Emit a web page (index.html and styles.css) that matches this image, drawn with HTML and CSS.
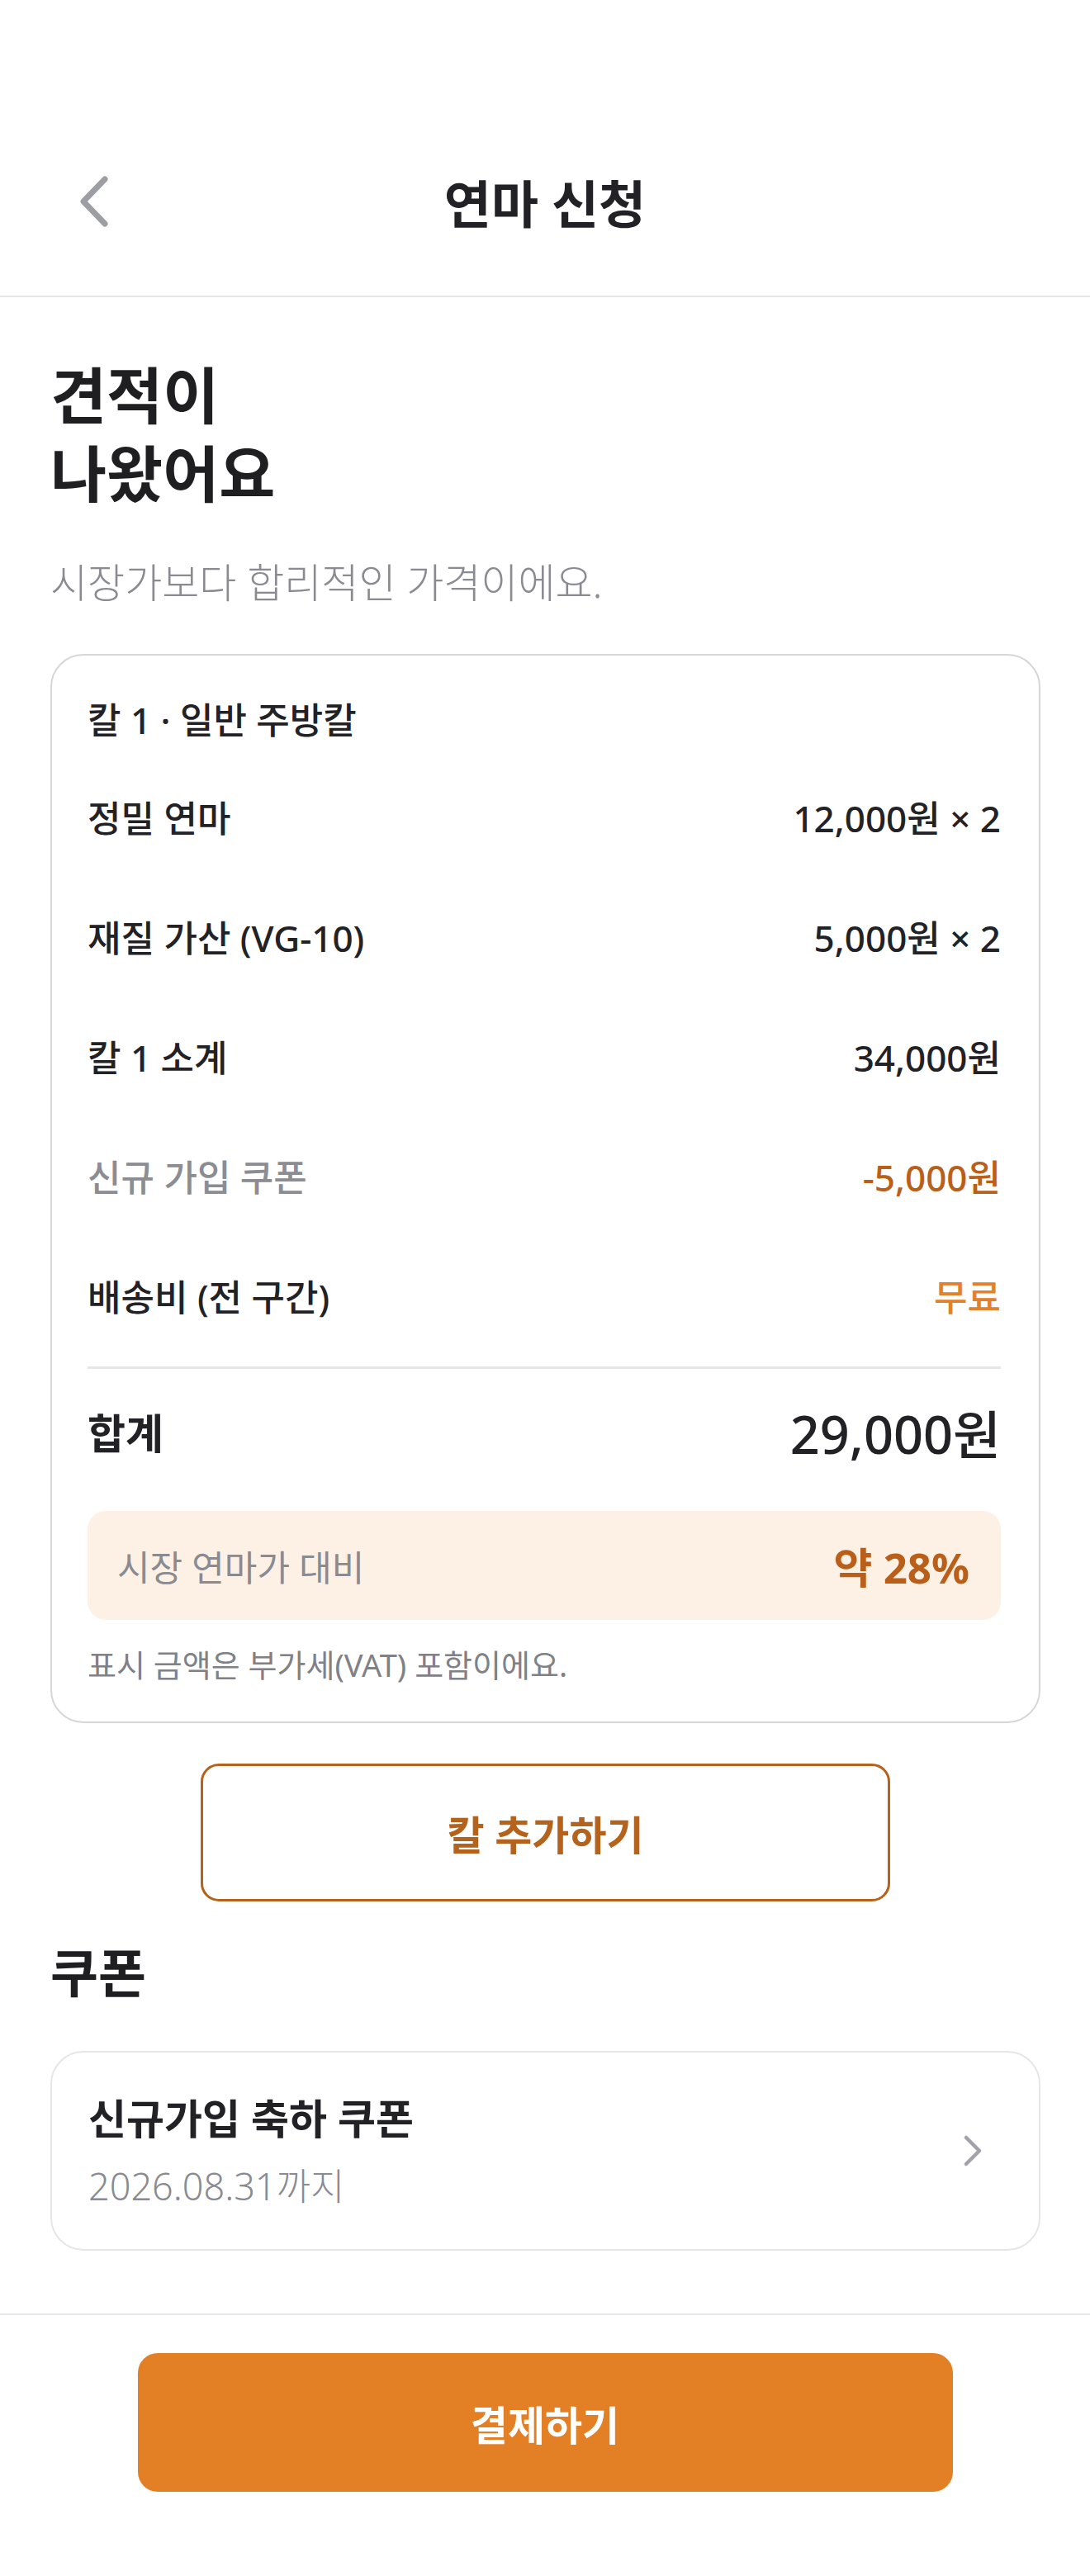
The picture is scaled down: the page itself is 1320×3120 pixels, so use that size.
FILE: index.html
```html
<!DOCTYPE html>
<html lang="ko">
<head>
    <meta charset="UTF-8">
    <meta name="viewport" content="width=device-width, initial-scale=1.0">
    <title>연마 신청</title>
    <link rel="stylesheet" href="styles.css">
</head>
<body>
    <div class="app">
        <header class="topbar">
            <button class="icon-button" aria-label="뒤로">
                <svg width="40" height="62" viewBox="0 0 40 62" fill="none">
                    <polyline points="31,4 5,31 31,58" stroke="#9d9da4" stroke-width="7" stroke-linecap="round" stroke-linejoin="round"/>
                </svg>
            </button>
            <h1 class="topbar-title">연마 신청</h1>
            <span></span>
        </header>

        <main class="content">
            <h2 class="headline">견적이<br>나왔어요</h2>
            <p class="lead">시장가보다 합리적인 가격이에요.</p>

            <section class="quote-card">
                <div class="knife-title">칼 1 · 일반 주방칼</div>
                <div class="line">
                    <span>정밀 연마</span>
                    <span>12,000원 × 2</span>
                </div>
                <div class="line">
                    <span>재질 가산 (VG-10)</span>
                    <span>5,000원 × 2</span>
                </div>
                <div class="line">
                    <span>칼 1 소계</span>
                    <span>34,000원</span>
                </div>
                <div class="line">
                    <span class="muted">신규 가입 쿠폰</span>
                    <span class="discount">-5,000원</span>
                </div>
                <div class="line">
                    <span>배송비 (전 구간)</span>
                    <span class="free">무료</span>
                </div>
                <div class="divider"></div>
                <div class="total">
                    <span>합계</span>
                    <span class="total-price">29,000원</span>
                </div>
                <div class="saving">
                    <span>시장 연마가 대비</span>
                    <strong>약 28%</strong>
                </div>
                <p class="vat-note">표시 금액은 부가세(VAT) 포함이에요.</p>
            </section>

            <button class="add-button">칼 추가하기</button>

            <h3 class="section-title">쿠폰</h3>
            <div class="coupon">
                <div class="coupon-text">
                    <div class="coupon-name">신규가입 축하 쿠폰</div>
                    <div class="coupon-date">2026.08.31까지</div>
                </div>
                <svg class="coupon-arrow" width="28" height="40" viewBox="0 0 28 40" fill="none">
                    <polyline points="6,4 22,20 6,36" stroke="#a2a2a8" stroke-width="4.5" stroke-linecap="round" stroke-linejoin="round"/>
                </svg>
            </div>
        </main>

        <footer class="bottom-bar">
            <button class="pay-button">결제하기</button>
        </footer>
    </div>
</body>
</html>
```

FILE: styles.css
```css
/* 기본 */
* {
    box-sizing: border-box;
}

body {
    margin: 0;
    background-color: #ffffff;
    color: #222226;
    font-family: "Noto Sans", "Noto Sans CJK KR", sans-serif;
}

button {
    font-family: inherit;
    background: none;
    border: none;
    padding: 0;
    cursor: pointer;
}

.app {
    min-height: 3120px;
    display: flex;
    flex-direction: column;
}

/* 상단 바 */
.topbar {
    margin-top: 130px;
    height: 230px;
    display: grid;
    grid-template-columns: 1fr auto 1fr;
    align-items: center;
    padding: 0 96px;
    border-bottom: 2px solid #e6e6e8;
}

.icon-button {
    justify-self: start;
    display: flex;
}

.topbar-title {
    margin: 0;
    font-size: 62px;
    font-weight: 700;
    color: #222226;
}

/* 본문 */
.content {
    flex: 1;
    padding: 0 60px 0 61px;
}

.headline {
    margin: 71px 0 0;
    font-size: 74px;
    line-height: 95px;
    font-weight: 700;
    color: #1f1f22;
}

.lead {
    margin: 52px 0 0;
    font-size: 49px;
    line-height: 64px;
    font-weight: 300;
    color: #8a8a91;
}

/* 견적 카드 */
.quote-card {
    margin-top: 55px;
    padding: 48px 46px 43px 43px;
    border: 2px solid #d6d6d8;
    border-radius: 40px;
}

.knife-title {
    font-size: 44px;
    line-height: 60px;
    font-weight: 500;
    margin-bottom: 14px;
}

.line {
    height: 145px;
    display: flex;
    align-items: center;
    justify-content: space-between;
    font-size: 44px;
    font-weight: 500;
}

.muted {
    color: #8c8c93;
}

.discount {
    color: #b95f19;
}

.free {
    color: #e3812a;
}

.divider {
    height: 3px;
    margin-top: 14px;
    background-color: #e6e6e8;
}

.total {
    height: 150px;
    display: flex;
    align-items: center;
    justify-content: space-between;
    font-size: 50px;
    font-weight: 700;
}

.total-price {
    font-size: 63px;
    font-weight: 500;
}

.saving {
    margin-top: 22px;
    height: 132px;
    padding: 0 38px 0 36px;
    display: flex;
    align-items: center;
    justify-content: space-between;
    border-radius: 22px;
    background-color: #fdf1e6;
    font-size: 43px;
    color: #8a8a91;
}

.saving strong {
    font-size: 51px;
    font-weight: 700;
    color: #b95f19;
}

.vat-note {
    margin: 28px 0 0;
    font-size: 38px;
    line-height: 52px;
    color: #808087;
}

/* 칼 추가 버튼 */
.add-button {
    display: block;
    width: 835px;
    height: 167px;
    margin: 49px auto 0;
    border: 3px solid #b5621c;
    border-radius: 22px;
    font-size: 49px;
    font-weight: 700;
    color: #b5621c;
}

/* 쿠폰 */
.section-title {
    margin: 44px 0 0;
    font-size: 63px;
    line-height: 84px;
    font-weight: 700;
    color: #1f1f22;
}

.coupon {
    margin-top: 53px;
    height: 242px;
    padding: 0 66px 0 44px;
    display: flex;
    align-items: center;
    justify-content: space-between;
    border: 2px solid #e6e6e8;
    border-radius: 40px;
}

.coupon-name {
    font-size: 50px;
    line-height: 66px;
    font-weight: 700;
}

.coupon-date {
    margin-top: 20px;
    font-size: 45px;
    line-height: 58px;
    font-weight: 300;
    color: #8a8a91;
}

/* 하단 결제 바 */
.bottom-bar {
    border-top: 2px solid #e8e8ea;
    padding: 46px 0 102px;
    display: flex;
    justify-content: center;
}

.pay-button {
    width: 987px;
    height: 168px;
    border-radius: 24px;
    background-color: #e37f24;
    color: #ffffff;
    font-size: 49px;
    font-weight: 700;
}
```
